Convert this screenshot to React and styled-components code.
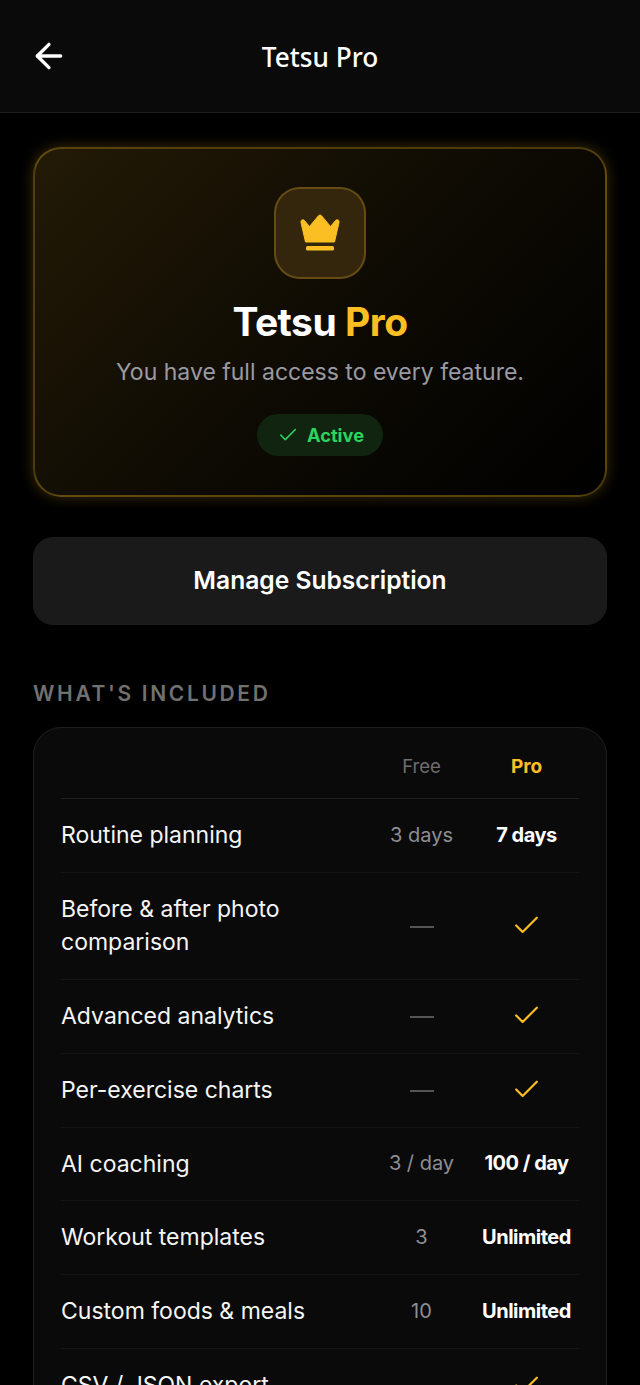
import React from 'react';
import styled, { createGlobalStyle } from 'styled-components';

const Global = createGlobalStyle`
  html, body {
    margin: 0;
    padding: 0;
    height: 1385px;
    overflow: hidden;
    background: #000;
    font-family: Inter, "Liberation Sans", sans-serif;
    color: #fff;
  }
  * { box-sizing: border-box; }
`;

const Page = styled.div`
  width: 640px;
  height: 1385px;
  overflow: hidden;
  background: #000;
`;

const Header = styled.header`
  height: 113px;
  display: flex;
  align-items: center;
  justify-content: center;
  padding: 2px 0 0;
  position: relative;
  background: #0a0a0a;
  border-bottom: 1px solid #1f1f1f;
`;

const BackButton = styled.button`
  position: absolute;
  left: 29px;
  top: 36px;
  width: 40px;
  height: 40px;
  padding: 0;
  border: 0;
  background: none;
  color: #fff;
`;

const HeaderTitle = styled.h1`
  margin: 0;
  font-family: "Noto Sans", sans-serif;
  font-size: 26.2px;
  font-weight: 500;
`;

const Content = styled.main`
  padding: 34px 33px 0;
`;

const HeroCard = styled.section`
  height: 350px;
  display: flex;
  flex-direction: column;
  align-items: center;
  padding-top: 38px;
  border: 2px solid rgba(251, 191, 36, 0.3);
  border-radius: 28px;
  background: linear-gradient(135deg, #231a06 0%, #0d0a03 55%, #000 100%);
  box-shadow: 0 0 14px rgba(251, 191, 36, 0.24);
`;

const IconBox = styled.div`
  width: 92px;
  height: 92px;
  display: flex;
  align-items: center;
  justify-content: center;
  border: 2px solid rgba(251, 191, 36, 0.25);
  border-radius: 26px;
  background: #33260c;
`;

const HeroTitle = styled.h2`
  margin: 19px 0 0;
  font-size: 39px;
  line-height: 47px;
  font-weight: 700;
  letter-spacing: -0.5px;
`;

const Gold = styled.span`
  color: #fbbf24;
`;

const HeroText = styled.p`
  margin: 10px 0 0;
  font-size: 23px;
  line-height: 34px;
  color: #9a9aa5;
`;

const ActiveBadge = styled.div`
  margin-top: 25px;
  height: 42px;
  padding: 0 19px 0 20px;
  display: flex;
  align-items: center;
  gap: 8px;
  border-radius: 21px;
  background: #10240f;
  color: #2bd45f;
  font-size: 18.3px;
  font-weight: 700;
`;

const ManageButton = styled.button`
  display: block;
  width: 100%;
  height: 88px;
  margin-top: 40px;
  padding: 0 0 2px;
  border: 1px solid #1c1c1c;
  border-radius: 20px;
  background: #1a1a1a;
  color: #fff;
  font-family: inherit;
  font-size: 24.6px;
  font-weight: 600;
`;

const SectionLabel = styled.h3`
  margin: 56px 0 0;
  font-size: 21px;
  line-height: 26px;
  font-weight: 600;
  letter-spacing: 2.65px;
  color: #717171;
`;

const TableCard = styled.section`
  margin-top: 20px;
  padding: 0 27px;
  border: 1px solid #1f1f1f;
  border-radius: 28px;
  background: #0a0a0a;
`;

const Row = styled.div`
  display: grid;
  grid-template-columns: 1fr 105px 105px;
  align-items: center;
  padding: 20px 0;
  border-bottom: 1px solid ${(p) => (p.$head ? '#1f1f1f' : '#141414')};
`;

const HeadRow = styled(Row)`
  min-height: 71px;
  padding: 6px 0 0;
`;

const Feature = styled.div`
  font-size: 23px;
  line-height: 32.9px;
  color: #f5f5f5;
`;

const Cell = styled.div`
  display: flex;
  justify-content: center;
  align-items: center;
  margin-top: -1px;
  white-space: nowrap;
  font-size: 20px;
  font-weight: ${(p) => (p.$pro ? 700 : 400)};
  letter-spacing: ${(p) => (p.$pro ? '-0.5px' : '0')};
  color: ${(p) => (p.$pro ? '#fff' : '#8e8e94')};
`;

const HeadCell = styled(Cell)`
  margin-top: 0;
  font-size: ${(p) => (p.$pro ? '19px' : '18.5px')};
  letter-spacing: 0;
  color: ${(p) => (p.$pro ? '#fbbf24' : '#6f6f6f')};
`;

const Dash = styled.span`
  width: 24px;
  height: 2px;
  margin-top: 3px;
  background: #555;
`;

const CheckWrap = styled.span`
  display: flex;
  color: #fbbf24;
`;

const Arrow = () => (
  <svg width="40" height="40" viewBox="0 0 24 24" fill="none" stroke="currentColor" strokeWidth="2" strokeLinecap="round" strokeLinejoin="round">
    <path d="m12 19-7-7 7-7" />
    <path d="M19 12H5" />
  </svg>
);

const Crown = () => (
  <svg width="42" height="38" viewBox="0 0 42 38" fill="#fbbf24">
    <path d="M6.500 28 2 8.500c-.5-2.200 1.500-3.500 3.200-2.200l5.300 6.200 8.800-10.600c.9-1.100 2.500-1.100 3.400 0l8.800 10.600 5.300-6.200c1.700-1.300 3.700 0 3.200 2.200L35.500 28z" stroke="#fbbf24" strokeWidth="1" strokeLinejoin="round" />
    <rect x="7" y="32" width="28" height="4.500" rx="1.500" />
  </svg>
);

const Check = ({ size = 31, width = 1.7 }) => (
  <svg width={size} height={size} viewBox="0 0 24 24" fill="none" stroke="currentColor" strokeWidth={width} strokeLinecap="round" strokeLinejoin="round">
    <path d="M20 6 9 17l-5-5" />
  </svg>
);

const rows = [
  ['Routine planning', '3 days', '7 days'],
  ['Before & after photo comparison', null, null],
  ['Advanced analytics', null, null],
  ['Per-exercise charts', null, null],
  ['AI coaching', '3 / day', '100 / day'],
  ['Workout templates', '3', 'Unlimited'],
  ['Custom foods & meals', '10', 'Unlimited'],
  ['CSV / JSON export', null, null],
];

const App = () => (
  <Page>
    <Global />
    <Header>
      <BackButton aria-label="Back">
        <Arrow />
      </BackButton>
      <HeaderTitle>Tetsu Pro</HeaderTitle>
    </Header>
    <Content>
      <HeroCard>
        <IconBox>
          <Crown />
        </IconBox>
        <HeroTitle>
          Tetsu <Gold>Pro</Gold>
        </HeroTitle>
        <HeroText>You have full access to every feature.</HeroText>
        <ActiveBadge>
          <Check size={22} />
          Active
        </ActiveBadge>
      </HeroCard>
      <ManageButton>Manage Subscription</ManageButton>
      <SectionLabel>WHAT'S INCLUDED</SectionLabel>
      <TableCard>
        <HeadRow $head>
          <div />
          <HeadCell>Free</HeadCell>
          <HeadCell $pro>Pro</HeadCell>
        </HeadRow>
        {rows.map(([name, free, pro]) => (
          <Row key={name}>
            <Feature>{name}</Feature>
            <Cell>{free || <Dash />}</Cell>
            <Cell $pro>
              {pro || (
                <CheckWrap>
                  <Check />
                </CheckWrap>
              )}
            </Cell>
          </Row>
        ))}
      </TableCard>
    </Content>
  </Page>
);

export default App;
